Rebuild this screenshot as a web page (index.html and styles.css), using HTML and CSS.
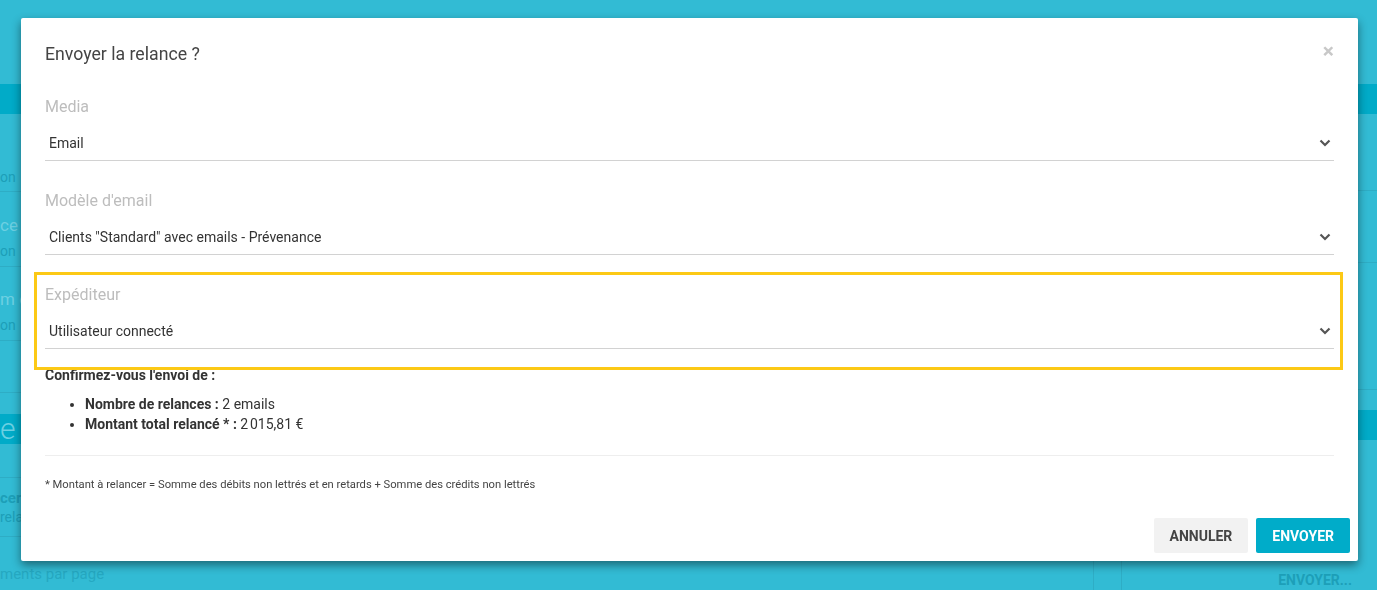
FILE: index.html
```html
<!DOCTYPE html>
<html lang="fr">
<head>
  <meta charset="UTF-8">
  <title>Relances</title>
  <link rel="stylesheet" href="styles.css">
</head>
<body>
  <!-- page derrière la modale -->
  <div class="page">
    <div class="page-top"></div>
    <div class="page-band"></div>
    <div class="page-body">
      <div class="list">
        <div class="row row-a">
          <div class="frag sub">on</div>
        </div>
        <div class="row row-b">
          <div class="frag light">ce</div>
          <div class="frag sub gap">on</div>
        </div>
        <div class="row row-c">
          <div class="frag light">m c</div>
          <div class="frag sub gap">on</div>
        </div>
        <div class="row row-d"></div>
        <div class="spacer"></div>
        <div class="band">
          <div class="frag big">e</div>
        </div>
        <div class="row row-e1"></div>
        <div class="row row-e2">
          <div class="frag strong">cer</div>
          <div class="frag small">rela</div>
        </div>
        <div class="pager">
          <div class="frag pager-text">ments par page</div>
        </div>
      </div>
      <div class="gutter"></div>
      <div class="aside">
        <div class="row aside-a"></div>
        <div class="row aside-b"></div>
        <div class="row aside-c"></div>
        <div class="spacer"></div>
        <div class="band"></div>
        <div class="aside-foot">Envoyer...</div>
      </div>
    </div>
  </div>

  <div class="overlay">
    <div class="modal">
      <div class="modal-header">
        <h4 class="modal-title">Envoyer la relance ?</h4>
        <button class="close" type="button">&times;</button>
      </div>

      <div class="modal-body">
        <div class="form-group">
          <label>Media</label>
          <div class="select">
            <span>Email</span>
            <svg class="chevron" width="12" height="8" viewBox="0 0 12 8"><path d="M1.5 1.5 L6 6 L10.5 1.5" /></svg>
          </div>
        </div>

        <div class="form-group">
          <label>Modèle d'email</label>
          <div class="select">
            <span>Clients "Standard" avec emails - Prévenance</span>
            <svg class="chevron" width="12" height="8" viewBox="0 0 12 8"><path d="M1.5 1.5 L6 6 L10.5 1.5" /></svg>
          </div>
        </div>

        <div class="form-group last">
          <label>Expéditeur</label>
          <div class="select">
            <span>Utilisateur connecté</span>
            <svg class="chevron" width="12" height="8" viewBox="0 0 12 8"><path d="M1.5 1.5 L6 6 L10.5 1.5" /></svg>
          </div>
          <div class="highlight-box"></div>
        </div>

        <p class="confirm">Confirmez-vous l'envoi de :</p>
        <ul class="summary">
          <li><b>Nombre de relances :</b> 2 emails</li>
          <li><b>Montant total relancé * :</b> 2&#8239;015,81 €</li>
        </ul>
        <hr>
        <p class="note">* Montant à relancer = Somme des débits non lettrés et en retards + Somme des crédits non lettrés</p>
      </div>

      <div class="modal-footer">
        <button class="btn btn-default" type="button">Annuler</button>
        <button class="btn btn-primary" type="button">Envoyer</button>
      </div>
    </div>
  </div>
</body>
</html>
```

FILE: styles.css
```css
body {
  margin: 0;
  height: 590px;
  overflow: hidden;
  font-family: Roboto, "Noto Sans", sans-serif;
  background: #32bbd4;
  color: #333;
}

/* ---- page en fond ---- */

.page-top {
  height: 84px;
}

.page-band {
  height: 30px;
  background: #01abc8;
}

.page-body {
  display: flex;
  height: 476px;
}

.list {
  width: 1093px;
  display: flex;
  flex-direction: column;
}

.gutter {
  width: 27px;
  border-left: 1px solid rgba(0,0,0,0.07);
  border-right: 1px solid rgba(0,0,0,0.07);
}

.aside {
  flex: 1;
  display: flex;
  flex-direction: column;
}

.row {
  box-sizing: border-box;
  border-bottom: 1px solid rgba(0,0,0,0.07);
}

.row-a { height: 78px; padding-top: 53px; }
.row-b { height: 75px; padding-top: 22px; }
.row-c { height: 74px; padding-top: 21px; }
.row-d { height: 52px; }
.row-e1 { height: 34px; }
.row-e2 { height: 59px; padding-top: 10px; }

.aside-a { height: 78px; }
.aside-b { height: 73px; }
.aside-c { height: 129px; }

.spacer {
  height: 21px;
}

.band {
  height: 30px;
  background: #01abc8;
}

.frag {
  white-space: nowrap;
}

.frag.gap { margin-top: 5px; }

.sub {
  font-size: 14px;
  line-height: 20px;
  color: #1d9fb8;
}

.light {
  font-size: 17px;
  line-height: 22px;
  color: #6dd0e2;
}

.big {
  font-size: 30px;
  line-height: 30px;
  font-weight: 300;
  color: #6dd0e2;
}

.strong {
  font-size: 15px;
  line-height: 20px;
  font-weight: 700;
  color: #1d9fb8;
}

.small {
  font-size: 14px;
  line-height: 18px;
  color: #1d9fb8;
}

.pager {
  padding-top: 27px;
}

.pager-text {
  font-size: 15px;
  line-height: 20px;
  color: #25a8c1;
}

.aside-foot {
  padding-top: 130px;
  padding-right: 25px;
  text-align: right;
  font-size: 14px;
  line-height: 20px;
  font-weight: 700;
  text-transform: uppercase;
  color: #1d9fb8;
}

/* ---- modale ---- */

.overlay {
  position: fixed;
  top: 0;
  left: 0;
  right: 0;
  bottom: 0;
  padding: 18px 19px 0 21px;
}

.modal {
  width: 1337px;
  background: white;
  border-radius: 2px;
  box-shadow: 0 4px 10px rgba(0,0,0,0.45);
}

.modal-header {
  display: flex;
  justify-content: space-between;
  align-items: flex-start;
  padding: 25px 24px 0;
}

.modal-title {
  margin: 0;
  font-size: 17.7px;
  line-height: 22px;
  font-weight: 400;
  color: #444;
}

.close {
  padding: 0;
  margin-top: -5px;
  border: none;
  background: transparent;
  font-family: Roboto, sans-serif;
  font-size: 21px;
  line-height: 26px;
  font-weight: 700;
  color: #c8c8c8;
  cursor: pointer;
}

.modal-body {
  padding: 32px 24px 0;
}

.form-group {
  position: relative;
  margin-bottom: 30px;
}

.form-group.last {
  margin-bottom: 16px;
}

.form-group label {
  display: block;
  margin-bottom: 9px;
  font-size: 16px;
  line-height: 20px;
  color: #bdbdbd;
}

.select {
  box-sizing: border-box;
  height: 35px;
  display: flex;
  justify-content: space-between;
  align-items: center;
  padding: 0 3px 0 4px;
  border-bottom: 1px solid #d2d2d2;
  font-size: 14px;
  color: #333;
}

.chevron path {
  fill: none;
  stroke: #555;
  stroke-width: 2.2;
}

.highlight-box {
  position: absolute;
  top: -13px;
  left: -11px;
  right: -9px;
  bottom: -21px;
  border: 3px solid #fcc916;
  pointer-events: none;
}

.confirm {
  margin: 0 0 9px;
  font-size: 14px;
  line-height: 20px;
  font-weight: 700;
  color: #333;
}

.summary {
  margin: 0;
  padding-left: 40px;
  font-size: 14px;
  line-height: 20px;
  color: #333;
}

hr {
  margin: 21px 0 20px;
  border: 0;
  border-top: 1px solid #eee;
}

.note {
  margin: 0;
  font-size: 11.2px;
  line-height: 17px;
  color: #444;
}

.modal-footer {
  display: flex;
  justify-content: flex-end;
  gap: 8px;
  padding: 25px 8px 8px;
}

.btn {
  height: 35px;
  padding: 0 16px;
  border: none;
  border-radius: 2px;
  font-family: Roboto, sans-serif;
  font-size: 14px;
  font-weight: 700;
  text-transform: uppercase;
  cursor: pointer;
}

.btn-default {
  background: #f2f2f2;
  color: #444;
}

.btn-primary {
  background: #00acc9;
  color: white;
}
```
